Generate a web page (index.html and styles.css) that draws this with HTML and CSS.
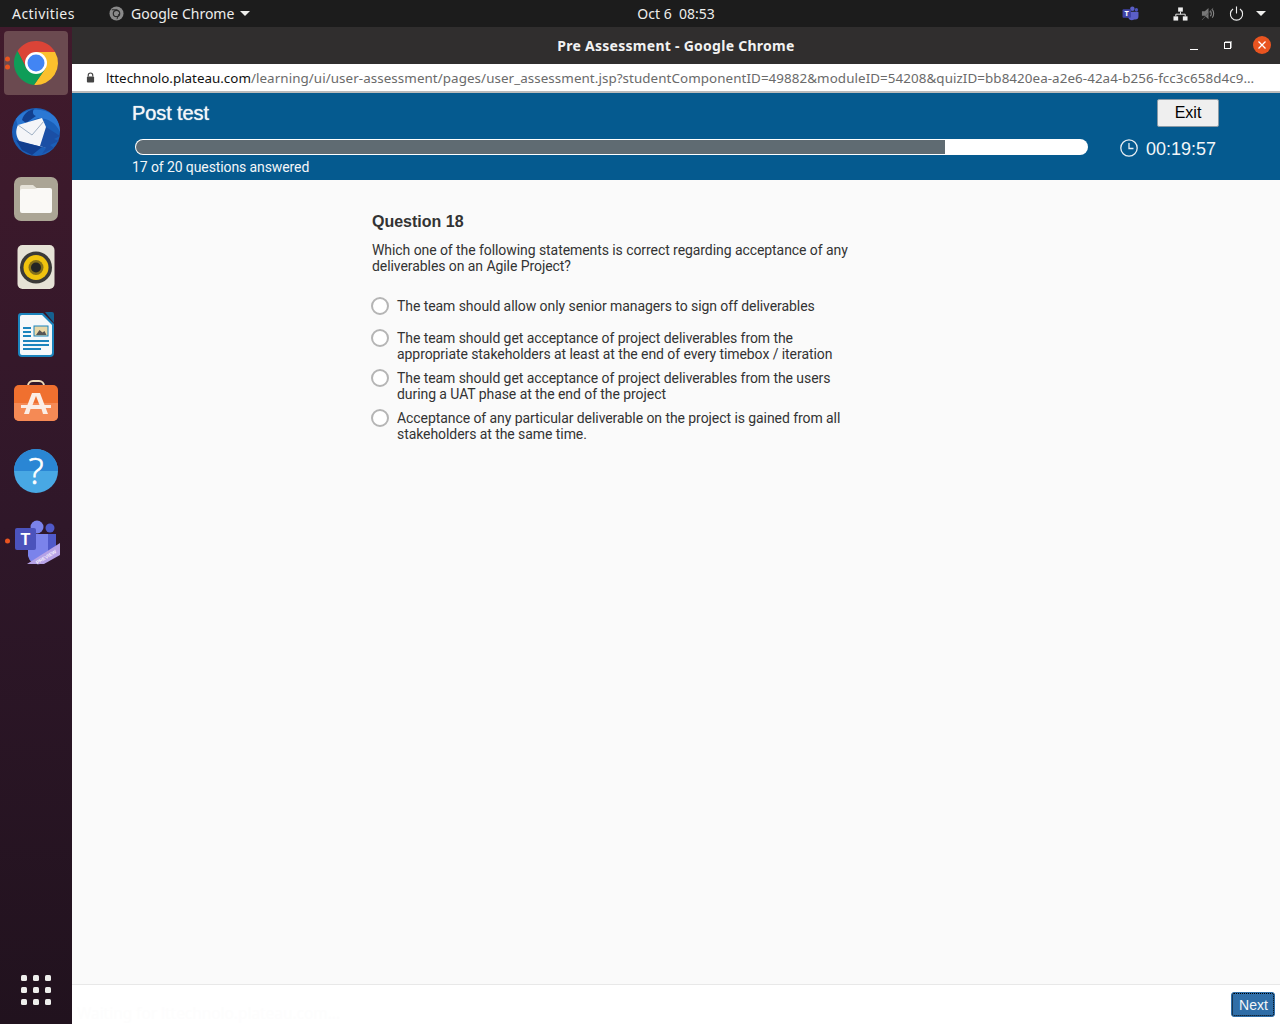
FILE: index.html
```html
<!DOCTYPE html>
<html>
<head>
    <title>Pre Assessment - Google Chrome</title>
    <link rel="stylesheet" href="styles.css">
</head>
<body>
    <div class="topbar">
        <div class="topbar-left">
            <span class="activities">Activities</span>
            <span class="app-menu">
                <svg class="app-menu-icon" viewBox="0 0 16 16"><circle cx="8" cy="8" r="7.5" fill="#8a8a8a"/><circle cx="8" cy="8" r="3.4" fill="none" stroke="#2a2a2a" stroke-width="1.3"/><path d="M10.5 8.5 8.5 14M3 4h6" stroke="#2a2a2a" stroke-width="1"/></svg>
                Google Chrome
                <span class="caret"></span>
            </span>
        </div>
        <div class="clock">Oct 6&nbsp; 08:53</div>
        <div class="tray">
            <svg class="tray-teams" viewBox="0 0 18 16"><circle cx="11" cy="3" r="2.4" fill="#5b5fc7"/><circle cx="15.3" cy="4" r="1.8" fill="#4b53bc"/><path d="M6 6h10.5a1 1 0 0 1 1 1v4a3.5 3.5 0 0 1-3.5 3.5h-1a5 5 0 0 1-6.5-2z" fill="#5b5fc7"/><rect x="0.5" y="3.5" width="9" height="9" rx="1" fill="#3f43a6"/><text x="5" y="10.8" class="tray-t">T</text></svg>
            <svg class="tray-net" viewBox="0 0 16 14"><rect x="5.5" y="0" width="5" height="4.5" fill="#eee"/><rect x="0.5" y="9.5" width="5" height="4.5" fill="#eee"/><rect x="10.5" y="9.5" width="5" height="4.5" fill="#eee"/><path d="M8 4.5V7.2M3 9.5V7.2H13V9.5" fill="none" stroke="#eee" stroke-width="1"/></svg>
            <svg class="tray-sound" viewBox="0 0 16 16"><path d="M1 5.5h3L8 2v12L4 10.5H1z" fill="#777"/><path d="M10 5c1 1.6 1 4.4 0 6M12 3.5c2 2.5 2 6.5 0 9" fill="none" stroke="#888" stroke-width="1.2"/><path d="M1 15 13 2" stroke="#555" stroke-width="1"/></svg>
            <svg class="tray-power" viewBox="0 0 16 16"><path d="M4.3 3.2a6.5 6.5 0 1 0 7.4 0" fill="none" stroke="#eee" stroke-width="1.2"/><path d="M8 0.5v7.5" stroke="#eee" stroke-width="1.2"/></svg>
            <span class="caret"></span>
        </div>
    </div>

    <div class="desktop">
        <nav class="dock">
            <ul class="dock-list">
                <li class="dock-item dock-item-active">
                    <span class="run-dots"><i></i><i></i></span>
                    <svg class="dock-icon" viewBox="0 0 48 48">
                        <path d="M43.05 13H24L14.5 29.5 5.5 12A22 22 0 0 1 43.05 13Z" fill="#db4437"/>
                        <path d="M43.05 13A22 22 0 0 1 22 45.9L33.5 29.5 24 13Z" fill="#fbc02d"/>
                        <path d="M5.5 12A22 22 0 0 0 22 45.9L33.5 29.5H14.5Z" fill="#0f9d58"/>
                        <circle cx="24" cy="24" r="11" fill="#fff"/>
                        <circle cx="24" cy="24" r="8.5" fill="#4285f4"/>
                    </svg>
                </li>
                <li class="dock-item">
                    <svg class="dock-icon" viewBox="0 0 48 48">
                        <circle cx="24" cy="25" r="24" fill="#1b5fb8"/>
                        <path d="M4 12C12 1 30-1 42 9 46 13 48 19 48 25 44 16 36 11 26 11L14 16 6 20Z" fill="#2b78d4"/>
                        <path d="M10 13C12 6 17 3 22 2 20 5 21 8 24 9L14 16Z" fill="#123f8f"/>
                        <path d="M6 18 30 11 34 20 36 41 8 35C4 30 3 24 6 18Z" fill="#f4f5f8"/>
                        <path d="M6 18 20 28 32 14" fill="none" stroke="#9fb0c4" stroke-width="1"/>
                        <path d="M34 20 48 29 42 32 47 34 38 38 42 41 30 47 34 41 28 39Z" fill="#1b4fa5"/>
                        <path d="M4 33 30 40 20 48 10 43Z" fill="#123f8f"/>
                    </svg>
                </li>
                <li class="dock-item">
                    <svg class="dock-icon" viewBox="0 0 48 48">
                        <rect x="2" y="2" width="44" height="44" rx="7" fill="#aba595"/>
                        <path d="M8 12a2 2 0 0 1 2-2h11l4 3.5V16H8z" fill="#e5e2d8"/>
                        <path d="M8 16a2 2 0 0 1 2-2h13l2-1h13a2 2 0 0 1 2 2v21a2 2 0 0 1-2 2H10a2 2 0 0 1-2-2z" fill="#faf9f6"/>
                    </svg>
                </li>
                <li class="dock-item">
                    <svg class="dock-icon" viewBox="0 0 48 48">
                        <rect x="5.5" y="2" width="37" height="44" rx="5" fill="#e6e2d6"/>
                        <circle cx="24" cy="24.5" r="16" fill="#3b3a38"/>
                        <circle cx="24" cy="24.5" r="12.5" fill="#f0c30e"/>
                        <circle cx="24" cy="24.5" r="7.5" fill="#85701a"/>
                        <circle cx="24" cy="24.5" r="5" fill="#242424"/>
                    </svg>
                </li>
                <li class="dock-item">
                    <svg class="dock-icon" viewBox="0 0 48 48">
                        <path d="M33 1h7a2 2 0 0 1 2 2v9z" fill="#15608f"/>
                        <path d="M9 2h22l11 11v29a4 4 0 0 1-4 4H10a4 4 0 0 1-4-4V5a3 3 0 0 1 3-3z" fill="#1b84bd"/>
                        <path d="M10 4h20l10 10v28a2 2 0 0 1-2 2H10a2 2 0 0 1-2-2V6a2 2 0 0 1 2-2z" fill="#f5f8fa"/>
                        <path d="M11 16h8v2h-8zM11 20h8v2h-8zM11 24h8v2h-8zM11 29h26v2H11zM11 33h26v2H11zM11 37h18v2H11z" fill="#1b84bd"/>
                        <rect x="22" y="15" width="14" height="10" fill="#e9d8a8" stroke="#1b84bd" stroke-width="1"/>
                        <path d="M24 24l3.5-5 3 2.5 2-1.5 2 4z" fill="#555"/>
                    </svg>
                </li>
                <li class="dock-item">
                    <svg class="dock-icon" viewBox="0 0 48 48">
                        <path d="M16 8V7a5 5 0 0 1 5-5h6a5 5 0 0 1 5 5v1" fill="none" stroke="#f0dcb8" stroke-width="2"/>
                        <rect x="2" y="6" width="44" height="36" rx="5" fill="#f0702f"/>
                        <path d="M2 24H46V37a5 5 0 0 1-5 5H7a5 5 0 0 1-5-5z" fill="#f58a55"/>
                        <path d="M20 14h8l8 21h-5l-1.5-5h-11L17 35h-5zM24 17l-3.5 9h7z" fill="#fbeee6"/>
                        <rect x="9" y="26" width="30" height="3" fill="#fbeee6"/>
                    </svg>
                </li>
                <li class="dock-item">
                    <svg class="dock-icon" viewBox="0 0 48 48">
                        <circle cx="24" cy="24" r="22" fill="#48a8e4"/>
                        <path d="M2 24a22 22 0 0 1 44 0z" fill="#2a86d4"/>
                        <text x="24" y="37" class="help-mark">?</text>
                    </svg>
                </li>
                <li class="dock-item dock-item-teams">
                    <span class="run-dots"><i></i></span>
                    <svg class="dock-icon" viewBox="0 0 48 48">
                        <circle cx="25" cy="10" r="6.5" fill="#7b83eb"/>
                        <circle cx="38" cy="11" r="4.5" fill="#5059c9"/>
                        <path d="M30 17h14v14a6 6 0 0 1-6 6h-8z" fill="#5059c9"/>
                        <path d="M16 17h20v18a10 10 0 0 1-20 4z" fill="#7b83eb"/>
                        <rect x="3" y="11" width="21" height="22" rx="2" fill="#4b53bc"/>
                        <text x="13.5" y="28" class="teams-t">T</text>
                        <path d="M15 47 48 26V38L32 47z" fill="#b6a2e6"/>
                        <text x="0" y="0" class="preview-t" transform="translate(35 41.5) rotate(-32)">PREVIEW</text>
                    </svg>
                </li>
            </ul>
            <div class="apps-grid">
                <i></i><i></i><i></i><i></i><i></i><i></i><i></i><i></i><i></i>
            </div>
        </nav>

        <div class="browser">
            <div class="titlebar">
                <div class="title">Pre Assessment - Google Chrome</div>
                <div class="window-buttons">
                    <span class="win-min"></span>
                    <span class="win-restore"></span>
                    <span class="win-close">
                        <svg viewBox="0 0 10 10"><path d="M1.5 1.5l7 7M8.5 1.5l-7 7" stroke="#fff" stroke-width="1.3"/></svg>
                    </span>
                </div>
            </div>
            <div class="urlbar">
                <svg class="lock" viewBox="0 0 10 12"><path d="M2.5 5V3.5a2.5 2.5 0 0 1 5 0V5" fill="none" stroke="#444" stroke-width="1.3"/><rect x="1" y="5" width="8" height="6.5" rx="1" fill="#444"/></svg>
                <div class="url"><span class="url-host">lttechnolo.plateau.com</span>/learning/ui/user-assessment/pages/user_assessment.jsp?studentComponentID=49882&amp;moduleID=54208&amp;quizID=bb8420ea-a2e6-42a4-b256-fcc3c658d4c9…</div>
            </div>

            <header class="quiz-header">
                <div class="quiz-top">
                    <h1>Post test</h1>
                    <button class="exit-btn">Exit</button>
                </div>
                <div class="quiz-progress">
                    <div class="progress"><div class="progress-fill" style="width: 85.1%"></div></div>
                    <div class="timer">
                        <svg viewBox="0 0 18 18"><circle cx="9" cy="9" r="8.2" fill="none" stroke="#e8eef3" stroke-width="1.3"/><path d="M9 4v5.5h4.5" fill="none" stroke="#e8eef3" stroke-width="1.3"/></svg>
                        00:19:57
                    </div>
                </div>
                <div class="answered">17 of 20 questions answered</div>
            </header>

            <main class="quiz-body">
                <div class="question">
                    <h2>Question 18</h2>
                    <p class="question-text">Which one of the following statements is correct regarding acceptance of any deliverables on an Agile Project?</p>
                    <label class="option option-first"><span class="radio"></span><span>The team should allow only senior managers to sign off deliverables</span></label>
                    <label class="option"><span class="radio"></span><span>The team should get acceptance of project deliverables from the appropriate stakeholders at least at the end of every timebox / iteration</span></label>
                    <label class="option"><span class="radio"></span><span>The team should get acceptance of project deliverables from the users during a UAT phase at the end of the project</span></label>
                    <label class="option"><span class="radio"></span><span>Acceptance of any particular deliverable on the project is gained from all stakeholders at the same time.</span></label>
                </div>
            </main>

            <footer class="quiz-footer">
                <span class="status-text">Waiting for lttechnolo.plateau.com...</span>
                <button class="next-btn">Next</button>
            </footer>
        </div>
    </div>
</body>
</html>
```

FILE: styles.css
```css
* {
    box-sizing: border-box;
}
html, body {
    height: 100%;
}
body {
    margin: 0;
    display: flex;
    flex-direction: column;
    overflow: hidden;
    font-family: "Noto Sans", sans-serif;
    font-size: 14px;
}

/* top panel */
.topbar {
    height: 27px;
    flex: none;
    display: grid;
    grid-template-columns: 1fr auto 1fr;
    align-items: center;
    background-color: #1c1c1c;
    color: #eeeeec;
}
.topbar-left {
    display: flex;
    align-items: center;
    padding-left: 12px;
}
.activities {
    width: 97px;
    letter-spacing: 0.45px;
}
.app-menu {
    display: flex;
    align-items: center;
}
.app-menu-icon {
    width: 15px;
    height: 15px;
    margin-right: 7px;
}
.caret {
    display: inline-block;
    margin-left: 6px;
    border-left: 5px solid transparent;
    border-right: 5px solid transparent;
    border-top: 5px solid #eeeeec;
}
.clock {
    padding-left: 72px;
}
.tray {
    display: flex;
    align-items: center;
    justify-content: flex-end;
    padding-right: 14px;
}
.tray-teams {
    width: 17px;
    height: 15px;
    margin-right: 34px;
}
.tray-t {
    font-size: 8px;
    font-weight: bold;
    fill: #fff;
    text-anchor: middle;
}
.tray-net {
    width: 15px;
    height: 14px;
    margin-right: 13px;
}
.tray-sound {
    width: 15px;
    height: 15px;
    margin-right: 13px;
}
.tray-power {
    width: 15px;
    height: 15px;
    margin-right: 6px;
}

.desktop {
    flex: 1;
    display: flex;
    min-height: 0;
}

/* dock */
.dock {
    width: 72px;
    flex: none;
    display: flex;
    flex-direction: column;
    justify-content: space-between;
    background: linear-gradient(180deg, #411a2c 0%, #2f1729 50%, #21121e 100%);
    padding: 4px 0 19px;
}
.dock-list {
    list-style: none;
    margin: 0;
    padding: 0;
}
.dock-item {
    position: relative;
    width: 64px;
    height: 64px;
    margin: 0 0 4px 4px;
    border-radius: 4px;
    display: flex;
    align-items: center;
    justify-content: center;
}
.dock-item-active {
    background-color: #6b4a50;
}
.dock-item-teams {
    margin-top: 6px;
}
.dock-icon {
    width: 48px;
    height: 48px;
    overflow: visible;
}
.run-dots {
    position: absolute;
    left: 1px;
    top: 50%;
    transform: translateY(-50%);
    display: flex;
    flex-direction: column;
    gap: 3px;
}
.run-dots i {
    display: block;
    width: 5px;
    height: 5px;
    border-radius: 50%;
    background-color: #e95420;
}
.help-mark {
    font-family: "Open Sans", sans-serif;
    font-size: 36px;
    font-weight: 300;
    fill: #fff;
    stroke: #fff;
    stroke-width: 0.7px;
    text-anchor: middle;
}
.teams-t {
    font-family: "Liberation Sans", sans-serif;
    font-size: 16px;
    font-weight: bold;
    fill: #fff;
    text-anchor: middle;
}
.preview-t {
    font-family: "Liberation Sans", sans-serif;
    font-size: 5px;
    font-weight: bold;
    fill: #f3effc;
    text-anchor: middle;
}
.apps-grid {
    display: grid;
    grid-template-columns: repeat(3, 6px);
    gap: 6px;
    justify-content: center;
}
.apps-grid i {
    display: block;
    height: 6px;
    border-radius: 1.5px;
    background-color: #eeeeec;
}

/* chrome window */
.browser {
    flex: 1;
    min-width: 0;
    display: flex;
    flex-direction: column;
}
.titlebar {
    height: 37px;
    flex: none;
    display: flex;
    align-items: center;
    justify-content: center;
    position: relative;
    background-color: #302e2e;
    color: #f2f2f2;
}
.title {
    font-weight: bold;
    letter-spacing: 0.27px;
}
.window-buttons {
    position: absolute;
    right: 9px;
    top: 9px;
    display: flex;
    align-items: center;
}
.win-min {
    width: 8px;
    height: 1px;
    margin-top: 8px;
    margin-right: 26px;
    background-color: #fff;
}
.win-restore {
    width: 7px;
    height: 7px;
    margin-top: 1px;
    margin-right: 22px;
    border: 1px solid #fff;
    box-shadow: 1px -1px 0 0 #999;
}
.win-close {
    width: 18px;
    height: 18px;
    border-radius: 50%;
    background-color: #e95420;
    display: flex;
    align-items: center;
    justify-content: center;
}
.win-close svg {
    width: 10px;
    height: 10px;
}
.urlbar {
    height: 29px;
    flex: none;
    display: flex;
    align-items: center;
    padding: 0 20px 0 14px;
    background-color: #fff;
    border-bottom: 2px solid #bcbcbc;
    color: #6a6a6a;
    font-size: 13.4px;
}
.lock {
    width: 9px;
    height: 11px;
    flex: none;
    margin-right: 11px;
}
.url {
    white-space: nowrap;
    letter-spacing: 0.005em;
}
.url-host {
    color: #111;
    letter-spacing: 0;
}

/* assessment header */
.quiz-header {
    height: 87px;
    flex: none;
    padding: 6px 61px 0 60px;
    background-color: #055a8f;
    color: #f3f6f8;
    font-family: "Liberation Sans", sans-serif;
}
.quiz-top {
    display: flex;
    justify-content: space-between;
    align-items: center;
    height: 28px;
}
.quiz-top h1 {
    margin: 0;
    font-size: 20px;
    font-weight: normal;
    letter-spacing: -0.1px;
    text-shadow: 0 0 1px #f3f6f8;
}
.exit-btn {
    width: 62px;
    height: 28px;
    padding: 0;
    background-color: #efefef;
    border: 1px solid #8a9aa6;
    border-radius: 2px;
    color: #000;
    font-family: "Liberation Sans", sans-serif;
    font-size: 16px;
}
.quiz-progress {
    display: flex;
    align-items: flex-start;
    margin-top: 12px;
    padding-left: 3px;
}
.progress {
    width: 953px;
    height: 16px;
    background-color: #fff;
    border: 1px solid rgba(255, 255, 255, 0.35);
    border-radius: 8px;
    overflow: hidden;
}
.progress-fill {
    height: 100%;
    background-color: #5f6b72;
}
.timer {
    display: flex;
    align-items: center;
    margin-left: 32px;
    font-size: 18px;
}
.timer svg {
    width: 18px;
    height: 18px;
    margin-right: 8px;
    margin-bottom: 3px;
}
.answered {
    font-family: "Roboto", sans-serif;
    font-size: 14px;
    line-height: 16px;
    letter-spacing: -0.1px;
    margin-top: -1px;
}

/* question */
.quiz-body {
    flex: 1;
    min-height: 0;
    background-color: #fafafa;
    padding: 33px 0 0 300px;
    color: #333;
    font-family: "Roboto", sans-serif;
    letter-spacing: -0.07px;
}
.question {
    width: 482px;
}
.question h2 {
    margin: 0 0 11px;
    font-family: "Liberation Sans", sans-serif;
    font-size: 16px;
    line-height: 18px;
    letter-spacing: 0;
    color: #333;
}
.question-text {
    margin: 0;
    font-size: 14px;
    line-height: 16px;
}
.option {
    display: flex;
    line-height: 16px;
    height: 40px;
}
.option-first {
    height: 32px;
    margin-top: 24px;
}
.radio {
    width: 18px;
    height: 18px;
    flex: none;
    margin: -1px 8px 0 -1px;
    border: 2px solid #b5b5b5;
    border-radius: 50%;
    background-color: #fff;
}

/* bottom */
.quiz-footer {
    height: 40px;
    flex: none;
    display: flex;
    align-items: center;
    justify-content: space-between;
    padding: 0 5px 0 5px;
    background-color: #fff;
    border-top: 1px solid #e8e8e8;
}
.status-text {
    align-self: flex-end;
    color: #fdfdfd;
    font-size: 15.4px;
}
.next-btn {
    width: 44px;
    height: 25px;
    padding: 0 0 0 1px;
    background-color: #2f6ea8;
    border: 1px solid #2f6ea8;
    border-radius: 3px;
    outline: 1px dotted #000;
    outline-offset: -2px;
    color: #f3f6f8;
    font-family: "Liberation Sans", sans-serif;
    font-size: 14px;
}
```
